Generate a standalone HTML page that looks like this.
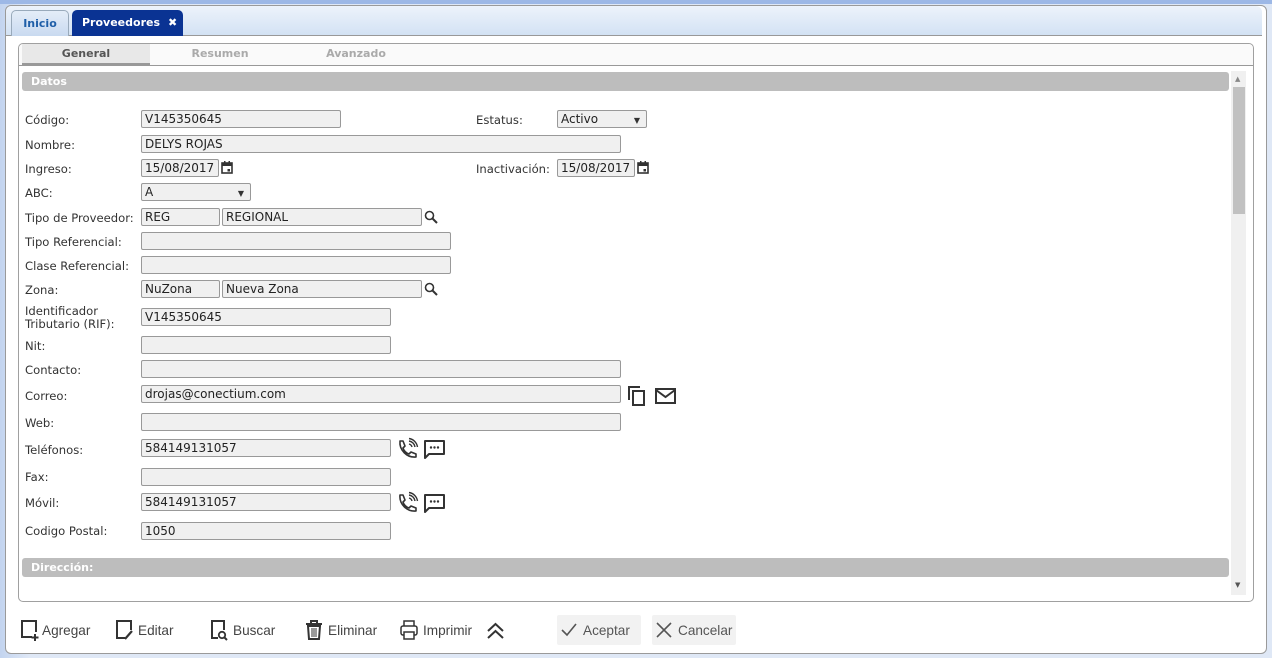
<!DOCTYPE html>
<html><head><meta charset="utf-8">
<style>
*{box-sizing:border-box;margin:0;padding:0}
body{width:1272px;height:658px;overflow:hidden;background:linear-gradient(to right,#c3d4ef,#dfe8f6 30px,#dfe8f6);position:relative;font-family:"DejaVu Sans","Liberation Sans",sans-serif}
.a{position:absolute}
.top{left:0;top:0;width:1272px;height:4px;background:#9db8e6}
.outer{left:5px;top:5px;width:1262px;height:649px;background:#fff;border:1px solid #9a9a9a;border-radius:6px}
.strip{left:6px;top:6px;width:1256px;height:30px;background:linear-gradient(#edf3fb,#d3e2f4);border-bottom:1px solid #999;border-radius:6px 6px 0 0}
.tab1{left:11px;top:10px;width:58px;height:26px;border:1px solid #9ab;border-bottom:none;border-radius:5px 5px 0 0;background:linear-gradient(#e4edf8,#c9daf0);color:#1f5fa8;font-weight:bold;font-size:11px;text-align:center;line-height:25px}
.tab2{left:72px;top:10px;width:111px;height:26px;border-radius:5px 5px 0 0;background:#0a3393;color:#fff;font-weight:bold;font-size:11px;line-height:25px;padding-left:10px}
.inner{left:18px;top:43px;width:1236px;height:559px;border:1px solid #a0a0a0;border-radius:5px;background:#fff}
.sub{left:19px;top:44px;width:1234px;height:22px;background:#fafafa;border-bottom:1px solid #999;border-radius:5px 5px 0 0}
.st{top:44px;height:21px;font-size:11px;font-weight:bold;line-height:20px;text-align:center}
.bar{left:22px;width:1207px;height:19px;background:#bdbdbd;border-radius:3px;color:#fff;font-weight:bold;font-size:11px;line-height:20px;padding-left:9px}
.lb{left:25px;font-size:11.6px;color:#333;line-height:13px}
.in{height:18px;background:#f0f0f0;border:1px solid #999;border-radius:2px;font-size:12px;color:#222;line-height:17px;padding-left:3px;white-space:nowrap}
.sel::after{content:"▼";position:absolute;right:6px;top:1px;font-size:8px;color:#333}
.tb{top:621px;font-family:"Liberation Sans",sans-serif;font-size:13.6px;color:#444;line-height:20px}
.btn{top:615px;height:30px;background:#f2f2f2;border-radius:2px;font-family:"Liberation Sans",sans-serif;font-size:13.6px;color:#555;line-height:31px}
svg{position:absolute;overflow:visible}
</style></head><body>
<div class="a top"></div>
<div class="a outer"></div>
<div class="a strip"></div>
<div class="a tab1">Inicio</div>
<div class="a tab2">Proveedores<span style="position:absolute;left:96px;font-size:11px">✖</span></div>
<div class="a inner"></div>
<div class="a sub"></div>
<div class="a st" style="left:22px;width:128px;background:#e8e8e8;color:#555;border-bottom:3px solid #999;height:22px">General</div>
<div class="a st" style="left:160px;width:120px;color:#aaa">Resumen</div>
<div class="a st" style="left:296px;width:120px;color:#aaa">Avanzado</div>
<div class="a" style="left:1231px;top:71px;width:15px;height:524px;background:#f0f0f0"></div>
<div class="a" style="left:1233px;top:87px;width:12px;height:127px;background:#c1c1c1"></div>
<div class="a" style="left:1235px;top:75px;font-size:7px;color:#888">▲</div>
<div class="a" style="left:1235px;top:581px;font-size:7px;color:#555">▼</div>
<div class="a bar" style="top:72px">Datos</div>
<div class="a bar" style="top:558px">Dirección:</div>

<div class="a lb" style="top:114px">Código:</div>
<div class="a in" style="left:141px;top:110px;width:200px">V145350645</div>
<div class="a lb" style="left:476px;top:114px">Estatus:</div>
<div class="a in sel" style="left:557px;top:110px;width:90px">Activo</div>
<div class="a lb" style="top:139px">Nombre:</div>
<div class="a in" style="left:141px;top:135px;width:480px">DELYS ROJAS</div>
<div class="a lb" style="top:163px">Ingreso:</div>
<div class="a in" style="left:141px;top:159px;width:78px">15/08/2017</div>
<svg style="left:221px;top:161px" width="12" height="13" viewBox="0 0 12 13"><rect x="1" y="2" width="10" height="10" fill="none" stroke="#333" stroke-width="1.6"/><rect x="1" y="2" width="10" height="3" fill="#333"/><rect x="3" y="0" width="1.5" height="3" fill="#333"/><rect x="7.5" y="0" width="1.5" height="3" fill="#333"/><rect x="6.5" y="8" width="2.5" height="2.5" fill="#333"/></svg>
<div class="a lb" style="left:476px;top:163px">Inactivación:</div>
<div class="a in" style="left:557px;top:159px;width:78px">15/08/2017</div>
<svg style="left:637px;top:161px" width="12" height="13" viewBox="0 0 12 13"><rect x="1" y="2" width="10" height="10" fill="none" stroke="#333" stroke-width="1.6"/><rect x="1" y="2" width="10" height="3" fill="#333"/><rect x="3" y="0" width="1.5" height="3" fill="#333"/><rect x="7.5" y="0" width="1.5" height="3" fill="#333"/><rect x="6.5" y="8" width="2.5" height="2.5" fill="#333"/></svg>
<div class="a lb" style="top:187px">ABC:</div>
<div class="a in sel" style="left:141px;top:183px;width:110px">A</div>
<div class="a lb" style="top:212px">Tipo de Proveedor:</div>
<div class="a in" style="left:141px;top:208px;width:79px">REG</div>
<div class="a in" style="left:222px;top:208px;width:200px">REGIONAL</div>
<svg style="left:424px;top:210px" width="14" height="14" viewBox="0 0 14 14"><circle cx="5.5" cy="5.5" r="4" fill="none" stroke="#333" stroke-width="1.6"/><path d="M8.5 8.5L13 13" stroke="#333" stroke-width="2"/></svg>
<div class="a lb" style="top:236px">Tipo Referencial:</div>
<div class="a in" style="left:141px;top:232px;width:310px"></div>
<div class="a lb" style="top:260px">Clase Referencial:</div>
<div class="a in" style="left:141px;top:256px;width:310px"></div>
<div class="a lb" style="top:284px">Zona:</div>
<div class="a in" style="left:141px;top:280px;width:79px">NuZona</div>
<div class="a in" style="left:222px;top:280px;width:200px">Nueva Zona</div>
<svg style="left:424px;top:282px" width="14" height="14" viewBox="0 0 14 14"><circle cx="5.5" cy="5.5" r="4" fill="none" stroke="#333" stroke-width="1.6"/><path d="M8.5 8.5L13 13" stroke="#333" stroke-width="2"/></svg>
<div class="a lb" style="top:305px">Identificador<br>Tributario (RIF):</div>
<div class="a in" style="left:141px;top:308px;width:250px">V145350645</div>
<div class="a lb" style="top:340px">Nit:</div>
<div class="a in" style="left:141px;top:336px;width:250px"></div>
<div class="a lb" style="top:364px">Contacto:</div>
<div class="a in" style="left:141px;top:360px;width:480px"></div>
<div class="a lb" style="top:390px">Correo:</div>
<div class="a in" style="left:141px;top:385px;width:480px">drojas@conectium.com</div>
<svg style="left:628px;top:386px" width="18" height="20" viewBox="0 0 18 20"><path d="M1 14V1h11" fill="none" stroke="#333" stroke-width="2"/><rect x="5" y="5" width="11" height="14" fill="none" stroke="#333" stroke-width="2"/></svg>
<svg style="left:655px;top:388px" width="21" height="16" viewBox="0 0 21 16"><rect x="1" y="1" width="19" height="14" fill="none" stroke="#333" stroke-width="2"/><path d="M1 2l9.5 7L20 2" fill="none" stroke="#333" stroke-width="2"/></svg>
<div class="a lb" style="top:417px">Web:</div>
<div class="a in" style="left:141px;top:413px;width:480px"></div>
<div class="a lb" style="top:444px">Teléfonos:</div>
<div class="a in" style="left:141px;top:439px;width:250px">584149131057</div>
<svg style="left:396px;top:438px" width="22" height="22" viewBox="0 0 22 22"><path d="M4 3l3 0 2 5-2 2c1 3 3 5 6 6l2-2 5 2v3c-9 1-17-7-16-16z" fill="none" stroke="#333" stroke-width="1.6" stroke-linejoin="round"/><path d="M13 6a4 4 0 0 1 3 3M13 3a7 7 0 0 1 6 6M13 0.5a10 10 0 0 1 8.5 8.5" fill="none" stroke="#333" stroke-width="1.4"/></svg>
<svg style="left:424px;top:440px" width="22" height="20" viewBox="0 0 22 20"><path d="M1 1h19v13H5l-4 4z" fill="none" stroke="#333" stroke-width="2" stroke-linejoin="round"/><circle cx="7" cy="7.5" r="1.2" fill="#333"/><circle cx="10.5" cy="7.5" r="1.2" fill="#333"/><circle cx="14" cy="7.5" r="1.2" fill="#333"/></svg>
<div class="a lb" style="top:471px">Fax:</div>
<div class="a in" style="left:141px;top:468px;width:250px"></div>
<div class="a lb" style="top:497px">Móvil:</div>
<div class="a in" style="left:141px;top:493px;width:250px">584149131057</div>
<svg style="left:396px;top:492px" width="22" height="22" viewBox="0 0 22 22"><path d="M4 3l3 0 2 5-2 2c1 3 3 5 6 6l2-2 5 2v3c-9 1-17-7-16-16z" fill="none" stroke="#333" stroke-width="1.6" stroke-linejoin="round"/><path d="M13 6a4 4 0 0 1 3 3M13 3a7 7 0 0 1 6 6M13 0.5a10 10 0 0 1 8.5 8.5" fill="none" stroke="#333" stroke-width="1.4"/></svg>
<svg style="left:424px;top:494px" width="22" height="20" viewBox="0 0 22 20"><path d="M1 1h19v13H5l-4 4z" fill="none" stroke="#333" stroke-width="2" stroke-linejoin="round"/><circle cx="7" cy="7.5" r="1.2" fill="#333"/><circle cx="10.5" cy="7.5" r="1.2" fill="#333"/><circle cx="14" cy="7.5" r="1.2" fill="#333"/></svg>
<div class="a lb" style="top:525px">Codigo Postal:</div>
<div class="a in" style="left:141px;top:522px;width:250px">1050</div>

<svg style="left:20px;top:620px" width="20" height="21" viewBox="0 0 20 21"><path d="M12 17H2V1h14v11" fill="none" stroke="#333" stroke-width="2"/><path d="M15 14v7M11.5 17.5h7" stroke="#333" stroke-width="2"/></svg>
<div class="a tb" style="left:42px">Agregar</div>
<svg style="left:115px;top:620px" width="20" height="21" viewBox="0 0 20 21"><path d="M10 18H2V1h14v9" fill="none" stroke="#333" stroke-width="2"/><path d="M10 19l7-8" stroke="#333" stroke-width="2.2"/></svg>
<div class="a tb" style="left:138px">Editar</div>
<svg style="left:210px;top:620px" width="20" height="21" viewBox="0 0 20 21"><path d="M8 18H2V1h12v9" fill="none" stroke="#333" stroke-width="2"/><circle cx="12" cy="15" r="3.2" fill="none" stroke="#333" stroke-width="1.8"/><path d="M14.5 17.5L17 20" stroke="#333" stroke-width="2"/></svg>
<div class="a tb" style="left:233px">Buscar</div>
<svg style="left:305px;top:620px" width="18" height="20" viewBox="0 0 18 20"><path d="M1 4h16M6 4V1h6v3" fill="none" stroke="#333" stroke-width="2"/><path d="M3 6h12l-1 13H4z" fill="none" stroke="#333" stroke-width="2"/><path d="M7 8v9M9 8v9M11 8v9" stroke="#333" stroke-width="1"/></svg>
<div class="a tb" style="left:328px">Eliminar</div>
<svg style="left:400px;top:620px" width="18" height="20" viewBox="0 0 18 20"><path d="M4 6V1h10v5" fill="none" stroke="#333" stroke-width="1.5"/><rect x="1" y="6" width="16" height="9" rx="2" fill="none" stroke="#333" stroke-width="1.5"/><rect x="4" y="12" width="10" height="7" fill="#fff" stroke="#333" stroke-width="1.5"/></svg>
<div class="a tb" style="left:423px">Imprimir</div>
<svg style="left:486px;top:622px" width="19" height="17" viewBox="0 0 19 17"><path d="M2 9l7.5-7 7.5 7M2 16l7.5-7 7.5 7" fill="none" stroke="#333" stroke-width="2"/></svg>
<div class="a btn" style="left:557px;width:84px"><svg style="left:4px;top:8px" width="16" height="14" viewBox="0 0 16 14"><path d="M1 7l5 5 9-11" fill="none" stroke="#555" stroke-width="1.6"/></svg><span style="position:absolute;left:26px">Aceptar</span></div>
<div class="a btn" style="left:652px;width:84px"><svg style="left:4px;top:7px" width="16" height="16" viewBox="0 0 16 16"><path d="M1 1l14 14M15 1L1 15" stroke="#555" stroke-width="1.6"/></svg><span style="position:absolute;left:26px">Cancelar</span></div>
</body></html>
